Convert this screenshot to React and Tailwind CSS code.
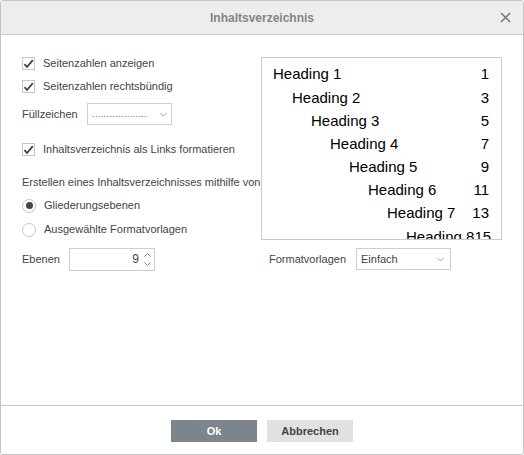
import React, { useState } from "react";

const headings = [
  { label: "Heading 1", page: "1" },
  { label: "Heading 2", page: "3" },
  { label: "Heading 3", page: "5" },
  { label: "Heading 4", page: "7" },
  { label: "Heading 5", page: "9" },
  { label: "Heading 6", page: "11" },
  { label: "Heading 7", page: "13" },
  { label: "Heading 8", page: "15" },
];

const indents = ["pl-0", "pl-[19px]", "pl-[38px]", "pl-[57px]", "pl-[76px]", "pl-[95px]", "pl-[114px]", "pl-[133px]"];

const Checkbox = ({ checked, label, onChange }) => (
  <label className="flex items-center h-[13px] cursor-pointer" onClick={onChange}>
    <span className="w-[13px] h-[13px] border border-[#c6c6c6] bg-white flex items-center justify-center">
      {checked && (
        <svg width="11" height="10" viewBox="0 0 11 10">
          <path d="M1.5 5.2 L4 8 L9.8 1.2" fill="none" stroke="#404040" strokeWidth="1.8" />
        </svg>
      )}
    </span>
    <span className="ml-[8px] text-[11px] text-[#444]">{label}</span>
  </label>
);

const Radio = ({ checked, label, onChange }) => (
  <label className="flex items-center h-[14px] cursor-pointer" onClick={onChange}>
    <span className="w-[14px] h-[14px] rounded-full border border-[#c6c6c6] bg-white flex items-center justify-center">
      {checked && <span className="w-[7px] h-[7px] rounded-full bg-[#444]" />}
    </span>
    <span className="ml-[8px] text-[11px] text-[#444]">{label}</span>
  </label>
);

const Chevron = () => (
  <svg width="7" height="5" viewBox="0 0 7 5">
    <path d="M0.5 1 L3.5 4 L6.5 1" fill="none" stroke="#999" strokeWidth="0.9" />
  </svg>
);

const App = () => {
  const [showNums, setShowNums] = useState(true);
  const [rightAlign, setRightAlign] = useState(true);
  const [asLinks, setAsLinks] = useState(true);
  const [mode, setMode] = useState("levels");

  return (
    <div className="w-[524px] h-[455px] bg-white border border-[#c4c4c4] rounded-[3px] flex flex-col font-['Liberation_Sans',Arial,sans-serif] overflow-hidden">
      <div className="h-[34px] shrink-0 bg-[#ededed] border-b border-[#cbcbcb] flex items-center justify-center relative">
        <span className="text-[12px] font-bold text-[#858585]">Inhaltsverzeichnis</span>
        <svg className="absolute right-[12px] top-[11px]" width="11" height="11" viewBox="0 0 11 11">
          <path d="M1 1 L10 10 M10 1 L1 10" stroke="#7a7a7a" strokeWidth="1.6" />
        </svg>
      </div>

      <div className="flex-1 flex px-[21px] pt-[22px]">
        <div className="w-[240px] flex flex-col">
          <Checkbox checked={showNums} label="Seitenzahlen anzeigen" onChange={() => setShowNums(!showNums)} />
          <div className="mt-[10px]">
            <Checkbox checked={rightAlign} label="Seitenzahlen rechtsbündig" onChange={() => setRightAlign(!rightAlign)} />
          </div>
          <div className="mt-[10px] flex items-center">
            <span className="text-[11px] text-[#444] w-[65px]">Füllzeichen</span>
            <div className="w-[85px] h-[22px] border border-[#cfcfcf] flex items-center px-[4px]">
              <span className="text-[9px] text-[#555] tracking-[0.4px] leading-none mt-[1px]">...................</span>
              <span className="ml-auto"><Chevron /></span>
            </div>
          </div>
          <div className="mt-[18px]">
            <Checkbox checked={asLinks} label="Inhaltsverzeichnis als Links formatieren" onChange={() => setAsLinks(!asLinks)} />
          </div>
          <div className="mt-[18px] text-[11px] text-[#444] whitespace-nowrap">
            Erstellen eines Inhaltsverzeichnisses mithilfe von
          </div>
          <div className="mt-[8px]">
            <Radio checked={mode === "levels"} label="Gliederungsebenen" onChange={() => setMode("levels")} />
          </div>
          <div className="mt-[10px]">
            <Radio checked={mode === "styles"} label="Ausgewählte Formatvorlagen" onChange={() => setMode("styles")} />
          </div>
          <div className="mt-[11px] flex items-center">
            <span className="text-[11px] text-[#444] w-[47px]">Ebenen</span>
            <div className="w-[86px] h-[23px] border border-[#cfcfcf] flex items-center">
              <span className="flex-1 text-right text-[12px] text-[#444] pr-[5px]">9</span>
              <div className="flex flex-col items-center justify-center pr-[3px] gap-[5px]">
                <svg width="7" height="4" viewBox="0 0 7 4">
                  <path d="M0.5 3.5 L3.5 0.5 L6.5 3.5" fill="none" stroke="#777" strokeWidth="0.9" />
                </svg>
                <svg width="7" height="4" viewBox="0 0 7 4">
                  <path d="M0.5 0.5 L3.5 3.5 L6.5 0.5" fill="none" stroke="#777" strokeWidth="0.9" />
                </svg>
              </div>
            </div>
          </div>
        </div>

        <div className="flex flex-col">
          <div className="w-[241px] h-[183px] border border-[#cbcbcb] overflow-hidden pl-[11px] pr-[12px] pt-[5px]">
            {headings.map((h, i) => (
              <div key={h.label} className={`flex h-[23.2px] items-center text-[15px] text-black whitespace-nowrap ${indents[i]}`}>
                <span>{h.label}</span>
                <span className="ml-auto">{h.page}</span>
              </div>
            ))}
          </div>
          <div className="mt-[8px] flex items-center pl-[8px]">
            <span className="text-[11px] text-[#444] w-[87px]">Formatvorlagen</span>
            <div className="w-[95px] h-[22px] border border-[#cfcfcf] flex items-center pl-[4px] pr-[6px]">
              <span className="text-[11px] text-[#444]">Einfach</span>
              <span className="ml-auto"><Chevron /></span>
            </div>
          </div>
        </div>
      </div>

      <div className="h-[49px] shrink-0 border-t border-[#cbcbcb] flex items-start justify-center gap-[10px] pt-[14px]">
        <button className="w-[86px] h-[22px] bg-[#7d858c] text-white text-[11px] font-bold">Ok</button>
        <button className="w-[86px] h-[22px] bg-[#e0e1e3] text-[#444] text-[11px] font-bold">Abbrechen</button>
      </div>
    </div>
  );
};

export default App;
